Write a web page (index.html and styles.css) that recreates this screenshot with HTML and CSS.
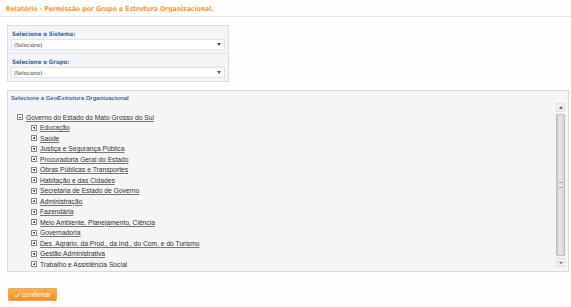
FILE: index.html
```html
<!DOCTYPE html>
<html lang="pt-BR">
<head>
    <meta charset="UTF-8">
    <meta name="viewport" content="width=device-width, initial-scale=1.0">
    <title>Relatório - Permissão por Grupo e Estrutura Organizacional</title>
    <link rel="stylesheet" href="styles.css">
</head>
<body>
    <h1 class="titulo">Relatório - Permissão por Grupo e Estrutura Organizacional.</h1>

    <div class="filtros">
        <div class="campo">
            <label for="sistema">Selecione o Sistema:</label>
            <span class="select-wrap">
                <select id="sistema" name="sistema">
                    <option>(Selecione)</option>
                </select>
            </span>
        </div>
        <div class="campo">
            <label for="grupo">Selecione o Grupo:</label>
            <span class="select-wrap">
                <select id="grupo" name="grupo">
                    <option>(Selecione)</option>
                </select>
            </span>
        </div>
    </div>

    <div class="geo">
        <div class="geo-titulo">Selecione a GeoEstrutura Organizacional</div>
        <div class="geo-corpo">
            <div class="arvore">
                <div class="no raiz">
                    <span class="expander menos"></span>
                    <a href="#">Governo do Estado do Mato Grosso do Sul</a>
                </div>
                <ul class="filhos">
                    <li><span class="expander"></span><a href="#">Educação</a></li>
                    <li><span class="expander"></span><a href="#">Saúde</a></li>
                    <li><span class="expander"></span><a href="#">Justiça e Segurança Pública</a></li>
                    <li><span class="expander"></span><a href="#">Procuradoria Geral do Estado</a></li>
                    <li><span class="expander"></span><a href="#">Obras Públicas e Transportes</a></li>
                    <li><span class="expander"></span><a href="#">Habitação e das Cidades</a></li>
                    <li><span class="expander"></span><a href="#">Secretaria de Estado de Governo</a></li>
                    <li><span class="expander"></span><a href="#">Administração</a></li>
                    <li><span class="expander"></span><a href="#">Fazendária</a></li>
                    <li><span class="expander"></span><a href="#">Meio Ambiente, Planejamento, Ciência</a></li>
                    <li><span class="expander"></span><a href="#">Governadoria</a></li>
                    <li><span class="expander"></span><a href="#">Des. Agrário, da Prod., da Ind., do Com. e do Turismo</a></li>
                    <li><span class="expander"></span><a href="#">Gestão Administrativa</a></li>
                    <li><span class="expander"></span><a href="#" class="ativo">Trabalho e Assistência Social</a></li>
                </ul>
            </div>
            <div class="scroll">
                <div class="scroll-btn cima"></div>
                <div class="scroll-trilho">
                    <div class="scroll-thumb"><span class="grip"></span></div>
                </div>
                <div class="scroll-btn baixo"></div>
            </div>
        </div>
    </div>

    <button type="button" class="btn-confirmar">
        <svg width="8" height="6" viewBox="0 0 8 6"><path d="M0.8 3.2 L3 5.2 L7.2 0.8" fill="none" stroke="#fbd8a8" stroke-width="1.2"/></svg>
        confirmar
    </button>
</body>
</html>
```

FILE: styles.css
```css
body {
    margin: 0;
    background-color: #fefefe;
    font-family: "Liberation Sans", Arial, sans-serif;
    font-size: 7px;
    color: #444;
}

.titulo {
    margin: 0;
    padding: 5px 0 3px 6px;
    font-family: "DejaVu Sans Condensed", "DejaVu Sans", sans-serif;
    font-size: 6.8px;
    font-weight: bold;
    color: #f39a2e;
    border-bottom: 1px solid #e6e6e6;
}

/* caixa dos filtros */
.filtros {
    margin: 8px 0 0 7px;
    width: 220px;
    background-color: #f4f5f7;
    border: 1px solid #d6dde6;
}

.campo {
    padding: 4px 3px 3px 3px;
}

.campo + .campo {
    border-top: 1px solid #e2e6ec;
}

.campo label {
    display: block;
    font-family: "DejaVu Sans Condensed", "DejaVu Sans", sans-serif;
    font-size: 6px;
    line-height: 7px;
    font-weight: bold;
    color: #3c6a98;
    margin-bottom: 2px;
    padding-left: 1px;
}

.select-wrap {
    display: block;
    position: relative;
}

.select-wrap select {
    display: block;
    width: 100%;
    height: 11px;
    padding: 0 0 0 2px;
    margin: 0;
    appearance: none;
    -webkit-appearance: none;
    background-color: #fff;
    border: 1px solid #dfe3e8;
    border-radius: 0;
    font-family: "DejaVu Sans Condensed", "DejaVu Sans", sans-serif;
    font-size: 5.6px;
    color: #333;
}

.select-wrap::after {
    content: "";
    position: absolute;
    right: 4px;
    top: 4px;
    border-left: 2.5px solid transparent;
    border-right: 2.5px solid transparent;
    border-top: 3px solid #555;
}

/* caixa da geoestrutura */
.geo {
    margin: 8px 2px 0 7px;
    background-color: #f4f5f7;
    border: 1px solid #d6dde6;
    height: 180px;
    display: flex;
    flex-direction: column;
}

.geo-titulo {
    padding: 4px 3px 0 3px;
    font-size: 6px;
    line-height: 7px;
    font-weight: bold;
    color: #3c6a98;
}

.geo-corpo {
    flex: 1;
    display: flex;
    min-height: 0;
    padding: 1px 3px 0 0;
}

.arvore {
    flex: 1;
    padding: 9px 0 0 9px;
    overflow: hidden;
}

.no {
    display: flex;
    align-items: center;
    height: 10.5px;
}

.arvore a {
    color: #333;
    text-decoration: underline;
    text-decoration-color: #777;
    font-size: 6.7px;
}

.arvore a.ativo {
    text-decoration: none;
}

.expander {
    box-sizing: border-box;
    width: 6px;
    height: 6px;
    border: 1px solid #888;
    background-color: #fff;
    margin-right: 3px;
    position: relative;
    flex-shrink: 0;
}

.expander::before,
.expander::after {
    content: "";
    position: absolute;
    background-color: #444;
}

.expander::before {
    left: 1px;
    top: 1.5px;
    width: 2px;
    height: 1px;
}

.expander::after {
    left: 1.5px;
    top: 1px;
    width: 1px;
    height: 2px;
}

.expander.menos::after {
    display: none;
}

.filhos {
    list-style: none;
    margin: 0;
    padding: 0 0 0 14px;
}

.filhos li {
    display: flex;
    align-items: center;
    height: 10.5px;
}

/* barra de rolagem */
.scroll {
    width: 9px;
    display: flex;
    flex-direction: column;
    gap: 2px;
    margin-bottom: 4px;
}

.scroll-btn {
    height: 7px;
    background-color: #eef0f2;
    border: 1px solid #e0e3e6;
    position: relative;
}

.scroll-btn::after {
    content: "";
    position: absolute;
    left: 2px;
    border-left: 2px solid transparent;
    border-right: 2px solid transparent;
}

.scroll-btn.cima::after {
    top: 2px;
    border-bottom: 3px solid #666;
}

.scroll-btn.baixo::after {
    top: 3px;
    border-top: 2px solid #666;
}

.scroll-trilho {
    flex: 1;
    display: flex;
}

.scroll-thumb {
    flex: 1;
    background: linear-gradient(to right, #c9c9c9, #eaeaea 40%, #d2d2d2);
    border: 1px solid #bdbdbd;
    border-radius: 1px;
    display: flex;
    align-items: center;
    justify-content: center;
}

.grip {
    width: 3px;
    height: 4px;
    border-top: 1px solid #999;
    border-bottom: 1px solid #999;
}

/* botão */
.btn-confirmar {
    margin: 16px 0 0 8px;
    height: 13px;
    width: 49px;
    padding: 0 0 0 4px;
    display: flex;
    align-items: center;
    gap: 1px;
    background: linear-gradient(to bottom, #fbae4a, #f2901f);
    border: 1px solid #f6a94a;
    border-radius: 1px;
    color: #fff;
    font-family: "Liberation Sans", Arial, sans-serif;
    font-size: 7px;
    cursor: pointer;
}

.btn-confirmar:hover {
    background: #ef8a1a;
}
```
